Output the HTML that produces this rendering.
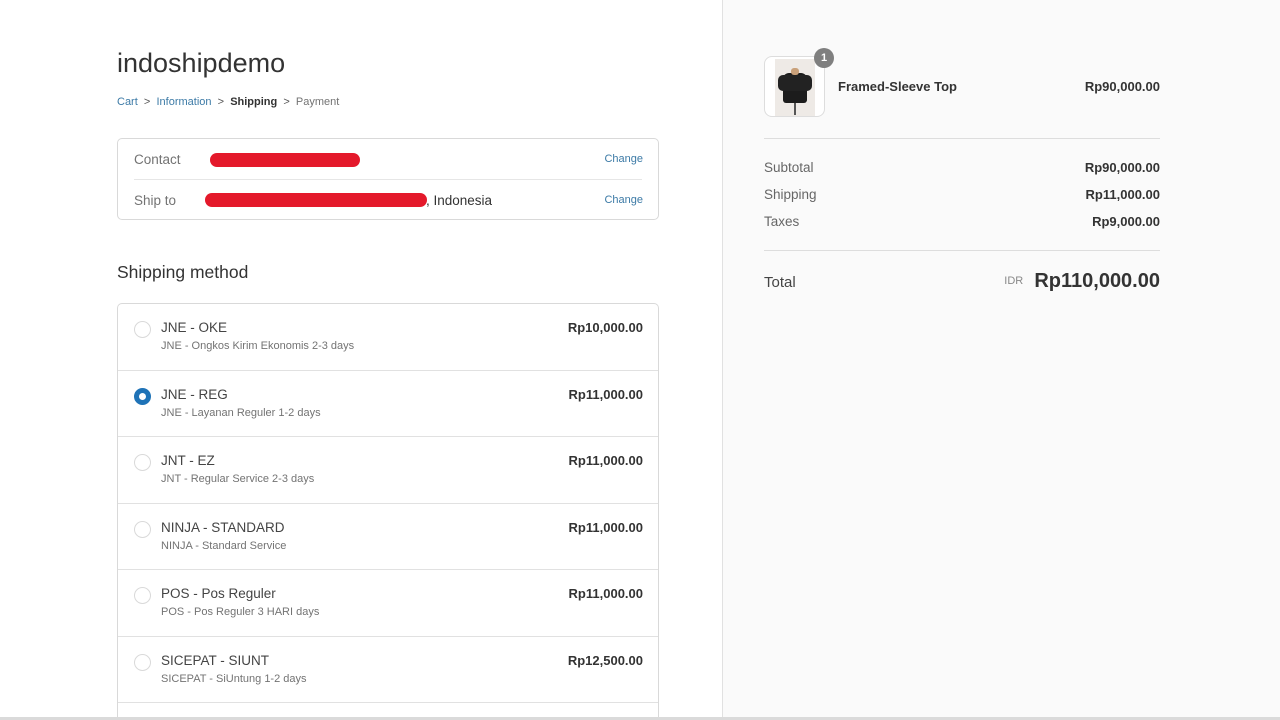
<!DOCTYPE html>
<html><head><meta charset="utf-8"><style>
*{margin:0;padding:0;box-sizing:border-box}
html,body{width:1280px;height:720px;overflow:hidden}
body{background:#fff;font-family:"Liberation Sans",sans-serif;color:#333;position:relative}
.a{position:absolute;white-space:nowrap}
.side{position:absolute;left:722px;top:0;width:558px;height:720px;background:#fafafa;border-left:1px solid #e1e1e1}
.box{position:absolute;left:117px;width:542px;border:1px solid #d9d9d9;border-radius:5px;background:#fff}
.row{position:absolute;left:0;width:540px;height:67px;border-top:1px solid #e1e1e1}
.radio{position:absolute;left:16px;top:17px;width:17px;height:17px;border-radius:50%;border:1px solid #d9d9d9}
.t{position:absolute;left:43px;top:16px;font-size:13.5px;color:#444}
.s{position:absolute;left:43px;top:36px;font-size:11px;color:#737373}
.p{position:absolute;right:15px;top:16px;font-size:13px;font-weight:bold;color:#333}
.red{position:absolute;height:14px;background:#e4192b;border-radius:7px}
</style></head><body>
<div class="a" style="left:117px;top:48px;font-size:27px;color:#333">indoshipdemo</div>
<div class="a" style="left:117px;top:96px;font-size:11px;color:#737373">
<span style="color:#3c7aa6">Cart</span>&nbsp; <span style="color:#555">&gt;</span> &nbsp;<span style="color:#3c7aa6">Information</span>&nbsp; <span style="color:#555">&gt;</span> &nbsp;<b style="color:#333">Shipping</b>&nbsp; <span style="color:#555">&gt;</span> &nbsp;Payment</div>
<div class="box" style="top:138px;height:82px">
<div class="a" style="left:16px;top:13px;font-size:13.5px;color:#737373">Contact</div>
<div class="red" style="left:92px;top:14px;width:150px"></div>
<div class="a" style="right:15px;top:14px;font-size:11px;color:#3c7aa6">Change</div>
<div style="position:absolute;left:16px;right:16px;top:40px;border-top:1px solid #e6e6e6"></div>
<div class="a" style="left:16px;top:54px;font-size:13.5px;color:#737373">Ship to</div>
<div class="a" style="left:308px;top:54px;font-size:13.5px;color:#333">, Indonesia</div>
<div class="red" style="left:87px;top:54px;width:222px"></div>
<div class="a" style="right:15px;top:55px;font-size:11px;color:#3c7aa6">Change</div>
</div>
<div class="a" style="left:117px;top:262px;font-size:17.5px;color:#333">Shipping method</div>
<div class="box" style="top:303px;height:414px;overflow:hidden;border-bottom:none;border-radius:5px 5px 0 0">
<div class="row" style="top:-1px"><div class="radio"></div><div class="t">JNE - OKE</div><div class="s">JNE - Ongkos Kirim Ekonomis 2-3 days</div><div class="p">Rp10,000.00</div></div>
<div class="row" style="top:66px"><div class="radio" style="border:5.5px solid #1f73b7;background:#fff"></div><div class="t">JNE - REG</div><div class="s">JNE - Layanan Reguler 1-2 days</div><div class="p">Rp11,000.00</div></div>
<div class="row" style="top:132px"><div class="radio"></div><div class="t">JNT - EZ</div><div class="s">JNT - Regular Service 2-3 days</div><div class="p">Rp11,000.00</div></div>
<div class="row" style="top:199px"><div class="radio"></div><div class="t">NINJA - STANDARD</div><div class="s">NINJA - Standard Service</div><div class="p">Rp11,000.00</div></div>
<div class="row" style="top:265px"><div class="radio"></div><div class="t">POS - Pos Reguler</div><div class="s">POS - Pos Reguler 3 HARI days</div><div class="p">Rp11,000.00</div></div>
<div class="row" style="top:332px"><div class="radio"></div><div class="t">SICEPAT - SIUNT</div><div class="s">SICEPAT - SiUntung 1-2 days</div><div class="p">Rp12,500.00</div></div>
<div class="row" style="top:398px;height:16px"></div>
</div>
<div class="side">
<div style="position:absolute;left:41px;top:56px;width:61px;height:61px;border:1px solid #ddd;border-radius:8px;background:#fff;overflow:hidden">
<div style="position:absolute;left:10px;top:2px;width:40px;height:57px;background:#eeeae6"></div>
<div style="position:absolute;left:18px;top:16px;width:24px;height:30px;background:#1c1c1c;border-radius:6px 6px 3px 3px"></div>
<div style="position:absolute;left:13px;top:18px;width:34px;height:16px;background:#222;border-radius:5px"></div>
<div style="position:absolute;left:26px;top:11px;width:8px;height:7px;background:#c9a17a;border-radius:3px"></div>
<div style="position:absolute;left:29px;top:46px;width:2px;height:12px;background:#555"></div>
</div>
<div style="position:absolute;left:91px;top:48px;width:20px;height:20px;border-radius:50%;background:#7f7f7f;color:#fff;font-size:11px;font-weight:bold;text-align:center;line-height:20px">1</div>
<div class="a" style="left:115px;top:79px;font-size:13px;font-weight:bold;color:#333">Framed-Sleeve Top</div>
<div class="a" style="right:120px;top:79px;font-size:13px;font-weight:bold;color:#333">Rp90,000.00</div>
<div style="position:absolute;left:41px;width:396px;top:138px;border-top:1px solid #ddd"></div>
<div class="a" style="left:41px;top:160px;font-size:13.5px;color:#666">Subtotal</div>
<div class="a" style="right:120px;top:160px;font-size:13px;font-weight:bold;color:#333">Rp90,000.00</div>
<div class="a" style="left:41px;top:187px;font-size:13.5px;color:#666">Shipping</div>
<div class="a" style="right:120px;top:187px;font-size:13px;font-weight:bold;color:#333">Rp11,000.00</div>
<div class="a" style="left:41px;top:214px;font-size:13.5px;color:#666">Taxes</div>
<div class="a" style="right:120px;top:214px;font-size:13px;font-weight:bold;color:#333">Rp9,000.00</div>
<div style="position:absolute;left:41px;width:396px;top:250px;border-top:1px solid #ddd"></div>
<div class="a" style="left:41px;top:274px;font-size:15px;color:#444">Total</div>
<div class="a" style="right:120px;top:270px;font-size:20px;font-weight:bold;color:#333"><span style="font-size:11px;font-weight:normal;color:#888;vertical-align:3px">IDR</span>&nbsp; Rp110,000.00</div>
</div>
<div style="position:absolute;left:0;top:717px;width:1280px;height:3px;background:#dadada"></div>
</body></html>
